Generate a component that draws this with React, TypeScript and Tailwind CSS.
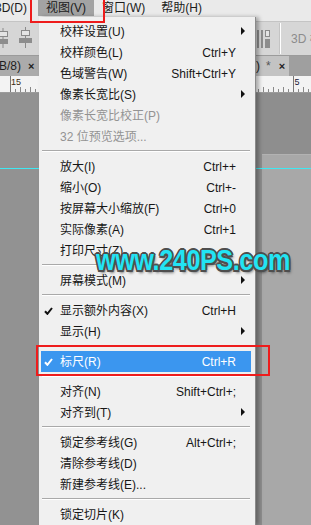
import React from 'react';

type Row =
  | { sep: true }
  | {
      sep?: false;
      label: string;
      shortcut?: string;
      sub?: boolean;
      disabled?: boolean;
      checked?: boolean;
      active?: boolean;
    };

const rows: Row[] = [
  { label: '校样设置(U)', sub: true },
  { label: '校样颜色(L)', shortcut: 'Ctrl+Y' },
  { label: '色域警告(W)', shortcut: 'Shift+Ctrl+Y' },
  { label: '像素长宽比(S)', sub: true },
  { label: '像素长宽比校正(P)', disabled: true },
  { label: '32 位预览选项...', disabled: true },
  { sep: true },
  { label: '放大(I)', shortcut: 'Ctrl++' },
  { label: '缩小(O)', shortcut: 'Ctrl+-' },
  { label: '按屏幕大小缩放(F)', shortcut: 'Ctrl+0' },
  { label: '实际像素(A)', shortcut: 'Ctrl+1' },
  { label: '打印尺寸(Z)' },
  { sep: true },
  { label: '屏幕模式(M)', sub: true },
  { sep: true },
  { label: '显示额外内容(X)', shortcut: 'Ctrl+H', checked: true },
  { label: '显示(H)', sub: true },
  { sep: true },
  { label: '标尺(R)', shortcut: 'Ctrl+R', checked: true, active: true },
  { sep: true },
  { label: '对齐(N)', shortcut: 'Shift+Ctrl+;' },
  { label: '对齐到(T)', sub: true },
  { sep: true },
  { label: '锁定参考线(G)', shortcut: 'Alt+Ctrl+;' },
  { label: '清除参考线(D)' },
  { label: '新建参考线(E)...' },
  { sep: true },
  { label: '锁定切片(K)' },
];

const Check = ({ white }: { white?: boolean }) => (
  <svg width="9" height="8" viewBox="0 0 9 8" className="absolute left-[3px] top-[7px]">
    <path d="M1 4.2 L3.4 6.8 L8 1" fill="none" stroke={white ? '#ffffff' : '#111111'} strokeWidth="2" />
  </svg>
);

const MenuRow: React.FC<{ row: Row }> = ({ row }) => {
  if (row.sep) {
    return (
      <div className="h-[9px] pt-[3px] px-[1px]">
        <div className="border-t border-[#a9a9a9] border-b border-b-white" />
      </div>
    );
  }
  const color = row.active ? 'text-white' : row.disabled ? 'text-[#939393]' : 'text-[#161616]';
  return (
    <div
      className={`relative h-[21px] flex items-center pl-[19px] pr-[15px] whitespace-nowrap ${color} ${
        row.active ? 'bg-[#3b96ef]' : ''
      }`}
    >
      {row.checked && <Check white={row.active} />}
      <span className="flex-1">{row.label}</span>
      {row.shortcut && <span>{row.shortcut}</span>}
      {row.sub && (
        <span className="absolute right-[6px] top-[6px] w-0 h-0 border-l-[4px] border-l-[#111] border-y-[4px] border-y-transparent" />
      )}
    </div>
  );
};

const App: React.FC = () => {
  return (
    <div
      className="relative w-[311px] h-[525px] overflow-hidden flex flex-col text-[12px] leading-none"
      style={{ fontFamily: '"Liberation Sans", "Noto Sans CJK SC", sans-serif' }}
    >
      {/* menu bar */}
      <div className="h-[21px] bg-[#eaeaea] flex items-start text-[#1b1b1b] whitespace-nowrap">
        <span className="ml-[-5px] mt-[2px]">3D(D)</span>
        <span className="ml-[11px] h-[16px] px-[8px] pt-[2px] bg-[#a3a3a3]">视图(V)</span>
        <span className="ml-[8px] mt-[2px]">窗口(W)</span>
        <span className="ml-[16px] mt-[2px]">帮助(H)</span>
      </div>

      {/* options bar */}
      <div className="h-[34px] bg-[#d6d6d6] border-t border-[#c4c4c4] flex">
        <svg width="39" height="33" viewBox="0 0 39 33">
          <line x1="3" y1="6" x2="3" y2="26" stroke="#8a8a8a" />
          <rect x="-4.5" y="9.5" width="12" height="5" fill="#e4e4e4" stroke="#8a8a8a" />
          <rect x="-6" y="17" width="14" height="5" fill="#8d8d8d" />
          <line x1="25.5" y1="5" x2="25.5" y2="26" stroke="#8a8a8a" />
          <rect x="21.5" y="8.5" width="8" height="5" fill="#e4e4e4" stroke="#8a8a8a" />
          <rect x="19" y="16" width="13" height="5" fill="#8d8d8d" />
        </svg>
        <div className="flex-1" />
        <div className="w-[55px] flex items-center overflow-hidden whitespace-nowrap">
          <svg width="24" height="33" viewBox="0 0 24 33" className="shrink-0">
            <rect x="1" y="8" width="2" height="18" fill="#8d8d8d" />
            <rect x="5" y="8" width="2" height="18" fill="#8d8d8d" />
            <rect x="9.5" y="8.5" width="4" height="6" fill="#e4e4e4" stroke="#8a8a8a" />
            <rect x="9" y="17" width="5" height="9" fill="#8d8d8d" />
            <line x1="24" y1="1" x2="24" y2="32" stroke="#b3b3b3" />
          </svg>
          <div className="w-px shrink-0 self-stretch my-[1px] bg-white" />
          <span className="ml-[10px] shrink-0 text-[#8c8c8c]">3D 模</span>
        </div>
      </div>

      {/* document tabs */}
      <div className="h-[21px] flex border-t border-[#9b9b9b]">
        <div className="w-[39px] bg-[#ababab] flex items-center text-[#1e1e1e] whitespace-nowrap">
          <span className="ml-[-1px]">B/8)</span>
          <span className="ml-[7px] font-bold text-[11px]">×</span>
        </div>
        <div className="flex-1" />
        <div className="w-[55px] flex">
          <div className="w-[33px] bg-[#c3c3c3] flex items-center text-[#222]">
            <span>)</span>
            <span className="ml-[6px] text-[#555]">*</span>
            <span className="ml-[8px] font-bold text-[11px]">×</span>
          </div>
          <div className="flex-1 bg-[#9f9f9f]" />
        </div>
      </div>

      {/* ruler */}
      <div className="h-[17px] bg-[#f3f3f3] border-b border-[#9c9c9c] flex">
        <svg width="39" height="16" viewBox="0 0 39 16">
          <line x1="10.5" y1="0" x2="10.5" y2="16" stroke="#777" />
          <text x="11" y="9" fontSize="9" fill="#3a2a10" fontFamily="Liberation Sans, sans-serif">15</text>
          {[15, 20, 25, 30, 35].map((x, i) => (
            <line key={x} x1={x + 0.5} y1={i % 2 ? 11 : 13} x2={x + 0.5} y2="16" stroke="#888" />
          ))}
        </svg>
        <div className="flex-1" />
        <svg width="55" height="16" viewBox="0 0 55 16">
          {[2, 7, 12, 17, 22, 27, 32].map((x, i) => (
            <line key={x} x1={x + 0.5} y1={i % 2 ? 11 : 13} x2={x + 0.5} y2="16" stroke="#888" />
          ))}
          <line x1="37.5" y1="0" x2="37.5" y2="16" stroke="#777" />
          <text x="38.5" y="9" fontSize="9" fill="#1a1a3a" fontFamily="Liberation Sans, sans-serif">5</text>
          {[42, 47, 52].map((x, i) => (
            <line key={x} x1={x + 0.5} y1={i % 2 ? 11 : 13} x2={x + 0.5} y2="16" stroke="#888" />
          ))}
        </svg>
      </div>

      {/* canvas area */}
      <div className="flex-1 flex">
        <div className="w-[39px] bg-[#929292]" />
        <div className="flex-1" />
        <div className="w-[55px] bg-[#8e8e8e] pl-[6px] pt-[61px] flex flex-col">
          <div className="flex-1 bg-[#a8a8a8] border-t border-[#b2b2b2]" />
        </div>
      </div>

      {/* guide line */}
      <div className="absolute left-0 right-0 top-[168px] h-px bg-[#3ee8f2]" />

      {/* View menu */}
      <div className="absolute left-[39px] top-[17px] bottom-0 w-[217px] bg-[#f0f0f0] border-r border-[#8a8a8a] shadow-[3px_0_4px_rgba(0,0,0,0.3)] pt-[4px] pl-[2px] pr-[4px]">
        {rows.map((r, i) => (
          <MenuRow key={i} row={r} />
        ))}
      </div>

      {/* red markers */}
      <div className="absolute left-[30px] top-[-3px] w-[75px] h-[26px] border-2 border-[#ee1c1c]" />
      <div className="absolute left-[36px] top-[345px] w-[234px] h-[31px] border-2 border-[#ee1c1c]" />

      {/* watermark */}
      <div
        className="absolute left-[96px] top-[245px] origin-left scale-x-[0.84] font-bold text-[30px] leading-none tracking-[-0.5px] text-[#22e4f4] whitespace-nowrap [text-shadow:1.5px_1.5px_0_#4e4e4e,-1.5px_-1.5px_0_#4e4e4e,1.5px_-1.5px_0_#4e4e4e,-1.5px_1.5px_0_#4e4e4e,0_2px_0_#4e4e4e,0_-2px_0_#4e4e4e,2px_0_0_#4e4e4e,-2px_0_0_#4e4e4e,2px_3px_3px_rgba(40,40,40,0.6)]"
        style={{ fontFamily: '"Liberation Sans", Arial, sans-serif' }}
      >
        www.240PS.com
      </div>
    </div>
  );
};

export default App;
